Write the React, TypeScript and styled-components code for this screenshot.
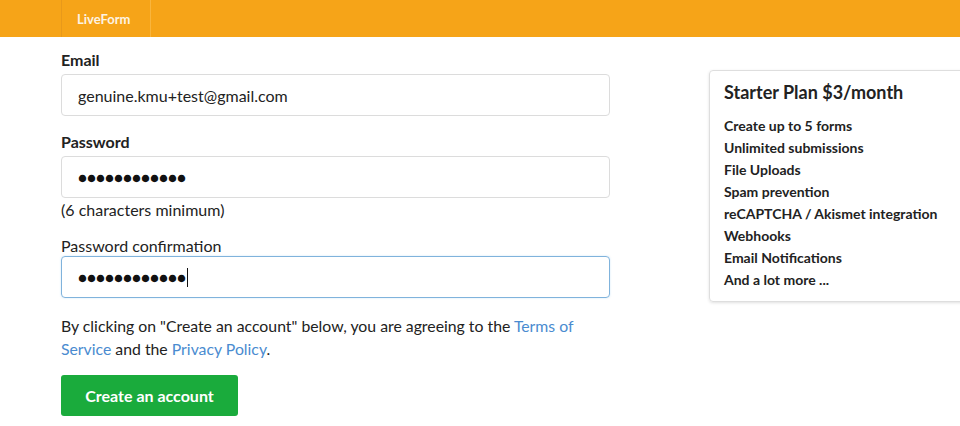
import React from "react";
import styled, { createGlobalStyle } from "styled-components";

const Global = createGlobalStyle`
  html, body { margin: 0; padding: 0; background: #fff; overflow: hidden; }
  body { font-family: Lato, "Open Sans", sans-serif; color: #222; width: 960px; }
  * { box-sizing: border-box; }
`;

const NavBar = styled.header`
  height: 37px;
  background: #f6a418;
  display: flex;
  padding-left: 61px;
`;

const Brand = styled.a`
  display: flex;
  align-items: center;
  padding: 0 15px;
  width: 90px;
  border-left: 1px solid #e8991a;
  border-right: 1px solid #f9b53d;
  color: #fdf3e3;
  font-weight: 700;
  font-size: 13px;
  text-decoration: none;
`;

const Main = styled.main`
  display: flex;
  align-items: flex-start;
  padding-left: 61px;
  width: 1100px;
`;

const FormCol = styled.form`
  width: 549px;
  flex-shrink: 0;
  padding-top: 13px;
`;

const Field = styled.div`
  margin-bottom: 16px;
`;

const Label = styled.label<{ $bold?: boolean; $gap?: number }>`
  display: block;
  font-size: 16px;
  font-weight: ${(p) => (p.$bold ? 700 : 400)};
  line-height: 20px;
  margin-bottom: ${(p) => (p.$gap ?? 4)}px;
  color: #222;
`;

const Input = styled.div<{ $focus?: boolean }>`
  height: 42px;
  border: 1px solid ${(p) => (p.$focus ? "#80b3dc" : "#dcdcdc")};
  border-radius: 4px;
  display: flex;
  align-items: center;
  padding: 0 16px;
  font-size: 16px;
  color: #222;
  box-shadow: ${(p) => (p.$focus ? "0 0 2px rgba(102,175,233,0.35)" : "none")};
`;

const Dots = styled.span`
  font-size: 15px;
  letter-spacing: 0;
  color: #111;
`;

const Caret = styled.span`
  display: inline-block;
  width: 1px;
  height: 19px;
  background: #111;
  margin-left: 1px;
  vertical-align: middle;
`;

const Hint = styled.div`
  font-size: 16px;
  line-height: 20px;
  margin-top: 2px;
  color: #222;
`;

const Terms = styled.p`
  font-size: 15.8px;
  line-height: 23px;
  margin: 16px 0 15px;
  color: #222;
`;

const Link = styled.a`
  color: #4a8bd0;
  text-decoration: none;
`;

const Button = styled.button`
  display: block;
  height: 41px;
  width: 177px;
  background: #1aab3c;
  border: none;
  border-radius: 3px;
  color: #fff;
  font-family: Lato, sans-serif;
  font-weight: 700;
  font-size: 16px;
`;

const Panel = styled.aside`
  margin-left: 99px;
  margin-top: 33px;
  width: 280px;
  flex-shrink: 0;
  border: 1px solid #dedede;
  border-radius: 4px;
  box-shadow: 0 1px 3px rgba(0,0,0,0.12);
  padding: 9px 14px 10px;
`;

const PanelTitle = styled.h3`
  margin: 0 0 11px;
  font-size: 18px;
  font-weight: 700;
  line-height: 24px;
  color: #222;
`;

const Features = styled.ul`
  list-style: none;
  margin: 0;
  padding: 0;
`;

const Feature = styled.li`
  font-size: 14px;
  font-weight: 700;
  line-height: 22px;
  color: #222;
`;

const features = [
  "Create up to 5 forms",
  "Unlimited submissions",
  "File Uploads",
  "Spam prevention",
  "reCAPTCHA / Akismet integration",
  "Webhooks",
  "Email Notifications",
  "And a lot more ...",
];

export default function App() {
  return (
    <>
      <Global />
      <NavBar>
        <Brand>LiveForm</Brand>
      </NavBar>
      <Main>
        <FormCol>
          <Field>
            <Label $bold>Email</Label>
            <Input>genuine.kmu+test@gmail.com</Input>
          </Field>
          <Field>
            <Label $bold>Password</Label>
            <Input>
              <Dots>●●●●●●●●●●●●</Dots>
            </Input>
            <Hint>(6 characters minimum)</Hint>
          </Field>
          <Field>
            <Label $gap={0}>Password confirmation</Label>
            <Input $focus>
              <Dots>●●●●●●●●●●●●</Dots>
              <Caret />
            </Input>
          </Field>
          <Terms>
            By clicking on "Create an account" below, you are agreeing to the{" "}
            <Link>Terms of Service</Link> and the <Link>Privacy Policy</Link>.
          </Terms>
          <Button type="button">Create an account</Button>
        </FormCol>
        <Panel>
          <PanelTitle>Starter Plan $3/month</PanelTitle>
          <Features>
            {features.map((f) => (
              <Feature key={f}>{f}</Feature>
            ))}
          </Features>
        </Panel>
      </Main>
    </>
  );
}
